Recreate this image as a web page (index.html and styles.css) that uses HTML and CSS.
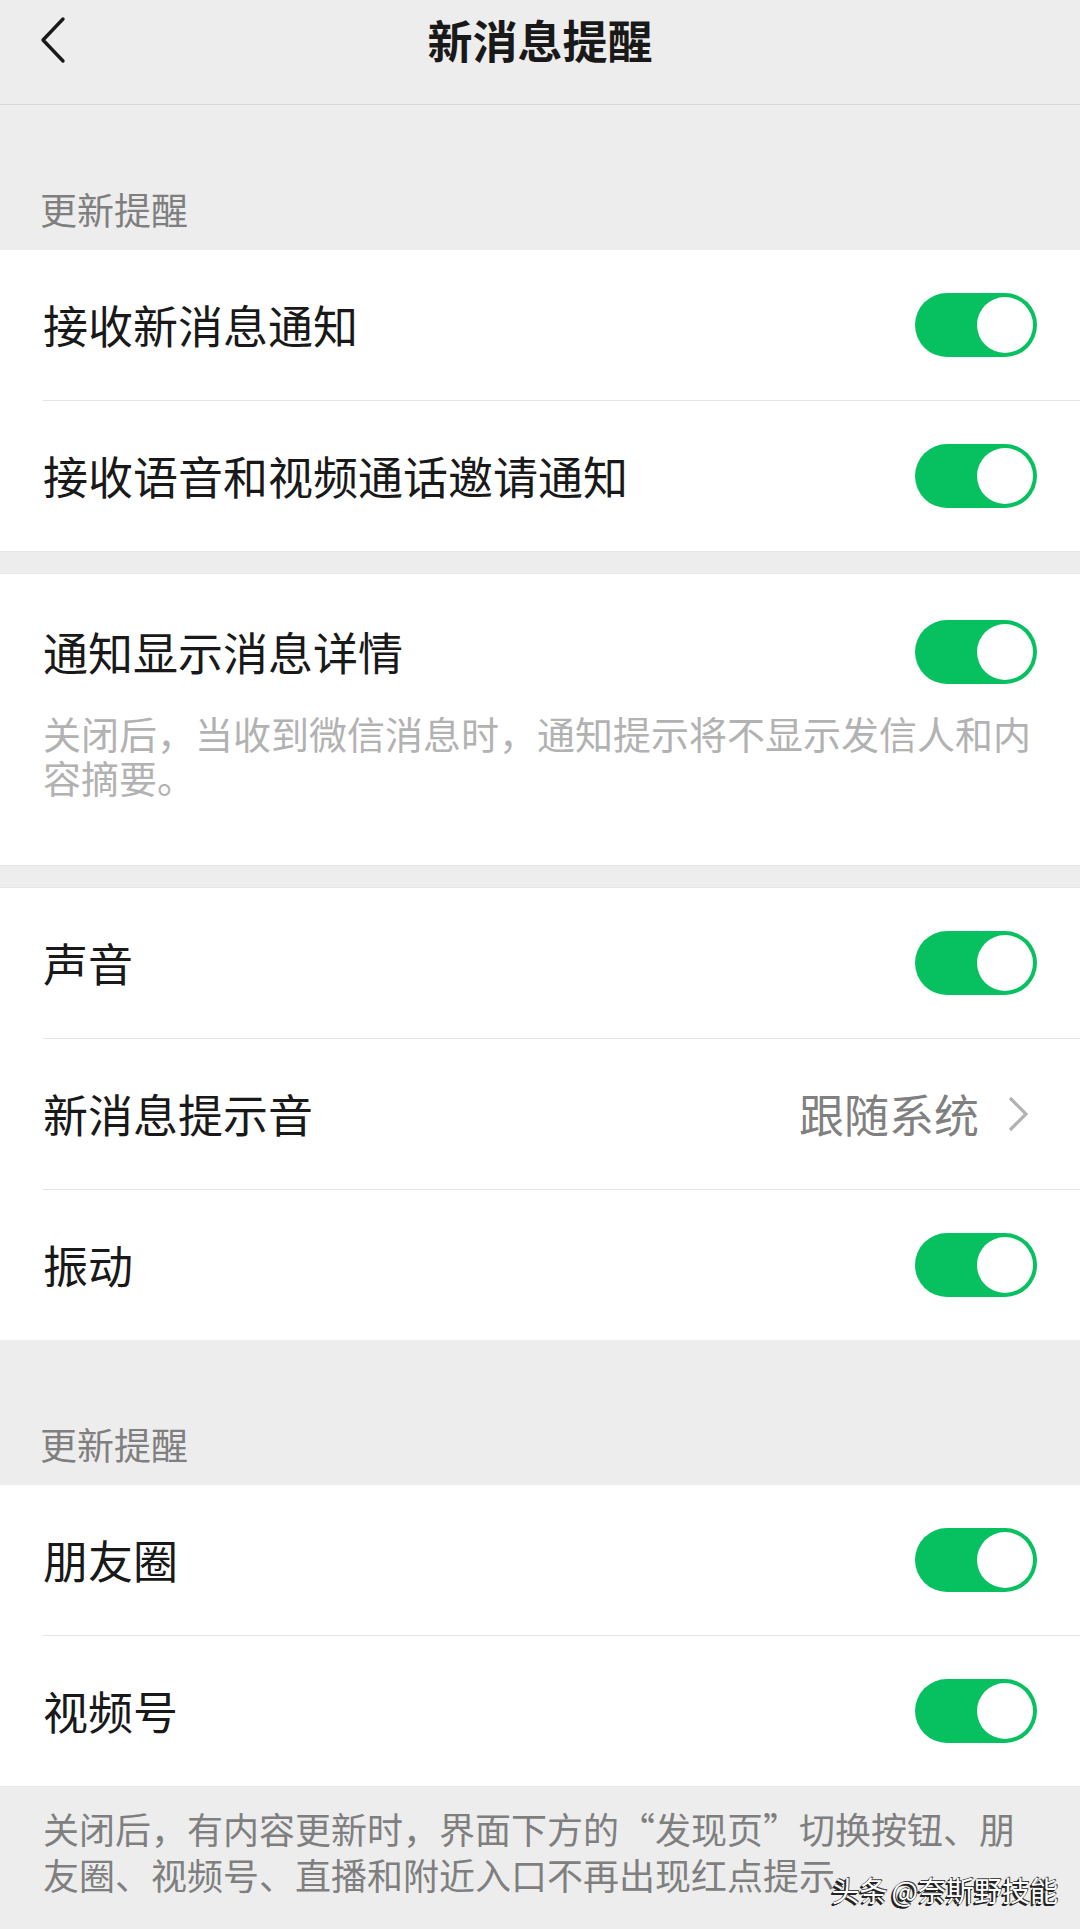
FILE: index.html
```html
<!DOCTYPE html>
<html lang="zh-CN">
<head>
<meta charset="utf-8">
<title>新消息提醒</title>
<link rel="stylesheet" href="styles.css">
</head>
<body>
<div class="page">
  <header class="nav">
    <div class="nav-bar">
      <span class="nav-back">
        <svg width="28" height="48" viewBox="0 0 28 48"><path d="M24 3 L4 24 L24 45" fill="none" stroke="#1a1a1a" stroke-width="3.4" stroke-linecap="round" stroke-linejoin="round"/></svg>
      </span>
      <h1 class="nav-title">新消息提醒</h1>
      <span></span>
    </div>
  </header>

  <div class="group-title">更新提醒</div>
  <section class="cells">
    <div class="cell"><span class="cell-label">接收新消息通知</span><span class="switch"><span class="knob"></span></span></div>
    <div class="cell"><span class="cell-label">接收语音和视频通话邀请通知</span><span class="switch"><span class="knob"></span></span></div>
  </section>

  <div class="gap"></div>
  <section class="cells detail">
    <div class="detail-row"><span class="cell-label">通知显示消息详情</span><span class="switch"><span class="knob"></span></span></div>
    <p class="detail-desc">关闭后，当收到微信消息时，通知提示将不显示发信人和内容摘要。</p>
  </section>

  <div class="gap"></div>
  <section class="cells">
    <div class="cell"><span class="cell-label">声音</span><span class="switch"><span class="knob"></span></span></div>
    <div class="cell"><span class="cell-label">新消息提示音</span><span class="cell-value">跟随系统<svg class="arrow" width="26" height="36" viewBox="0 0 26 36"><path d="M3 2 L19 18 L3 34" fill="none" stroke="#b2b2b2" stroke-width="3.2"/></svg></span></div>
    <div class="cell"><span class="cell-label">振动</span><span class="switch"><span class="knob"></span></span></div>
  </section>

  <div class="group-title">更新提醒</div>
  <section class="cells">
    <div class="cell"><span class="cell-label">朋友圈</span><span class="switch"><span class="knob"></span></span></div>
    <div class="cell"><span class="cell-label">视频号</span><span class="switch"><span class="knob"></span></span></div>
  </section>

  <p class="footer-tip">关闭后，有内容更新时，界面下方的“发现页”切换按钮、朋友圈、视频号、直播和附近入口不再出现红点提示。</p>

  <div class="watermark">头条<span class="wm-at">@</span>奈斯野技能</div>
</div>
</body>
</html>
```

FILE: styles.css
```css
* { box-sizing: border-box; }

html, body {
  margin: 0;
  padding: 0;
  background: #ededed;
}

body {
  font-family: "Noto Sans CJK SC", "Noto Sans", sans-serif;
  color: #191919;
}

.page {
  position: relative;
  width: 1080px;
  min-height: 1929px;
  background: #ededed;
  overflow: hidden;
}

.nav {
  height: 105px;
  border-bottom: 1px solid #d8d8d8;
  background: #ededed;
}

.nav-bar {
  height: 80px;
  display: grid;
  grid-template-columns: 1fr auto 1fr;
  align-items: center;
}

.nav-back {
  display: flex;
  align-items: center;
  padding-left: 39px;
}

.nav-back svg { display: block; }

.nav-title {
  margin: 0;
  font-size: 45px;
  font-weight: 700;
  line-height: 60px;
  color: #191919;
}

.group-title {
  height: 145px;
  display: flex;
  align-items: flex-end;
  padding: 0 0 16px 40px;
  font-size: 37px;
  line-height: 50px;
  color: #7f7f7f;
}

.cells {
  background: #ffffff;
  padding-left: 43px;
}

.cell {
  height: 150px;
  display: flex;
  align-items: center;
  justify-content: space-between;
  padding-right: 43px;
}

.cell + .cell {
  height: 151px;
  border-top: 1px solid #e5e5e5;
}

.cell-label {
  font-size: 45px;
  line-height: 60px;
  color: #191919;
}

.cell-value {
  display: flex;
  align-items: center;
  font-size: 45px;
  line-height: 60px;
  color: #808080;
}

.arrow {
  display: block;
  margin-left: 28px;
  margin-right: 4px;
}

.switch {
  width: 122px;
  height: 64px;
  border-radius: 32px;
  background: #07c160;
  display: flex;
  align-items: center;
  justify-content: flex-end;
  padding: 4px;
  flex-shrink: 0;
}

.knob {
  width: 56px;
  height: 56px;
  border-radius: 50%;
  background: #ffffff;
}

.gap {
  height: 23px;
  border-top: 1px solid #e6e6e6;
  border-bottom: 1px solid #e6e6e6;
}

.detail {
  height: 291px;
  padding-top: 46px;
  padding-right: 43px;
}

.detail-row {
  height: 64px;
  display: flex;
  align-items: center;
  justify-content: space-between;
}

.detail-desc {
  margin: 27px 0 0;
  font-size: 38px;
  line-height: 44px;
  color: #b2b2b2;
}

.footer-tip {
  margin: 0;
  border-top: 1px solid #e6e6e6;
  padding: 18px 43px 0 43px;
  font-size: 36px;
  line-height: 46px;
  color: #7f7f7f;
}

.watermark {
  position: absolute;
  right: 22px;
  bottom: 22px;
  font-size: 28px;
  line-height: 34px;
  color: #ffffff;
  text-shadow: -1px 1px 0 #222, -2px 2px 0 #222, 1px -1px 0 #444, 0 0 1px #000;
}

.wm-at {
  margin-left: 4px;
}
```
